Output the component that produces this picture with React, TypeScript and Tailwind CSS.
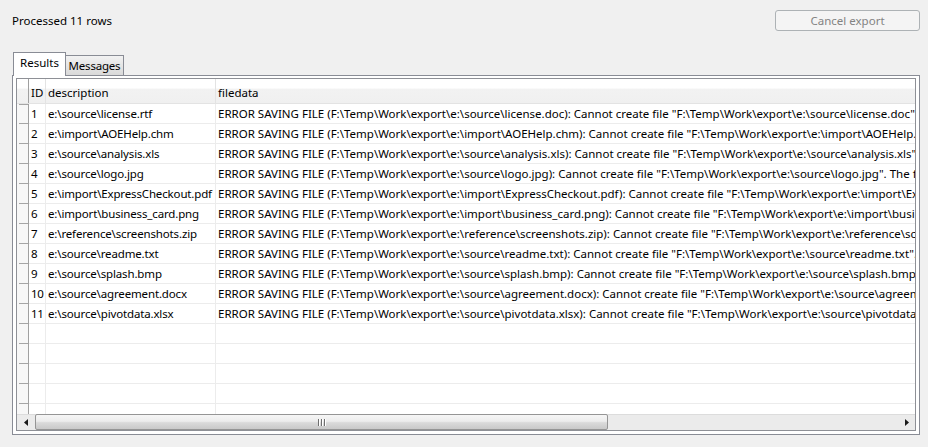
import React from "react";

const rows: [string, string, string][] = [
  ["1", "e:\\source\\license.rtf", "ERROR SAVING FILE (F:\\Temp\\Work\\export\\e:\\source\\license.doc): Cannot create file \"F:\\Temp\\Work\\export\\e:\\source\\license.doc\". The filename, directory name, or volume label syntax is incorrect"],
  ["2", "e:\\import\\AOEHelp.chm", "ERROR SAVING FILE (F:\\Temp\\Work\\export\\e:\\import\\AOEHelp.chm): Cannot create file \"F:\\Temp\\Work\\export\\e:\\import\\AOEHelp.chm\". The filename, directory name, or volume label syntax is incorrect"],
  ["3", "e:\\source\\analysis.xls", "ERROR SAVING FILE (F:\\Temp\\Work\\export\\e:\\source\\analysis.xls): Cannot create file \"F:\\Temp\\Work\\export\\e:\\source\\analysis.xls\". The filename, directory name, or volume label syntax is incorrect"],
  ["4", "e:\\source\\logo.jpg", "ERROR SAVING FILE (F:\\Temp\\Work\\export\\e:\\source\\logo.jpg): Cannot create file \"F:\\Temp\\Work\\export\\e:\\source\\logo.jpg\". The filename, directory name, or volume label syntax is incorrect"],
  ["5", "e:\\import\\ExpressCheckout.pdf", "ERROR SAVING FILE (F:\\Temp\\Work\\export\\e:\\import\\ExpressCheckout.pdf): Cannot create file \"F:\\Temp\\Work\\export\\e:\\import\\ExpressCheckout.pdf\". The filename, directory name, or volume label syntax is incorrect"],
  ["6", "e:\\import\\business_card.png", "ERROR SAVING FILE (F:\\Temp\\Work\\export\\e:\\import\\business_card.png): Cannot create file \"F:\\Temp\\Work\\export\\e:\\import\\business_card.png\". The filename, directory name, or volume label syntax is incorrect"],
  ["7", "e:\\reference\\screenshots.zip", "ERROR SAVING FILE (F:\\Temp\\Work\\export\\e:\\reference\\screenshots.zip): Cannot create file \"F:\\Temp\\Work\\export\\e:\\reference\\screenshots.zip\". The filename, directory name, or volume label syntax is incorrect"],
  ["8", "e:\\source\\readme.txt", "ERROR SAVING FILE (F:\\Temp\\Work\\export\\e:\\source\\readme.txt): Cannot create file \"F:\\Temp\\Work\\export\\e:\\source\\readme.txt\". The filename, directory name, or volume label syntax is incorrect"],
  ["9", "e:\\source\\splash.bmp", "ERROR SAVING FILE (F:\\Temp\\Work\\export\\e:\\source\\splash.bmp): Cannot create file \"F:\\Temp\\Work\\export\\e:\\source\\splash.bmp\". The filename, directory name, or volume label syntax is incorrect"],
  ["10", "e:\\source\\agreement.docx", "ERROR SAVING FILE (F:\\Temp\\Work\\export\\e:\\source\\agreement.docx): Cannot create file \"F:\\Temp\\Work\\export\\e:\\source\\agreement.docx\". The filename, directory name, or volume label syntax is incorrect"],
  ["11", "e:\\source\\pivotdata.xlsx", "ERROR SAVING FILE (F:\\Temp\\Work\\export\\e:\\source\\pivotdata.xlsx): Cannot create file \"F:\\Temp\\Work\\export\\e:\\source\\pivotdata.xlsx\". The filename, directory name, or volume label syntax is incorrect"],
];

const allRows: [string, string, string][] = [
  ...rows,
  ["", "", ""],
  ["", "", ""],
  ["", "", ""],
  ["", "", ""],
  ["", "", ""],
];

function RowHeader() {
  return (
    <div className="w-[12px] shrink-0 h-full bg-[#f7f7f7] border-r border-[#a0a0a0] flex flex-col justify-end">
      <div className="h-px ml-[2px] bg-[#a5a5a5]" />
    </div>
  );
}

export default function App() {
  return (
    <div
      className="w-[928px] h-[447px] bg-[#f0f0f0] flex flex-col pl-[12px] pr-[8px] pt-[10px] pb-[12px] text-[11.5px] text-black overflow-hidden"
      style={{ fontFamily: '"Noto Sans", "Open Sans", sans-serif' }}
    >
      {/* top bar */}
      <div className="h-[21px] flex items-center justify-between">
        <span className="leading-[16px] pt-[1px]">Processed 11 rows</span>
        <button className="w-[145px] h-[21px] rounded-[3px] border border-[#adb2b5] bg-[#f4f4f4] text-[#838383] leading-[16px] flex items-center justify-center">
          Cancel export
        </button>
      </div>

      {/* tabs */}
      <div className="mt-[21px] h-[24px] -mb-px flex items-end relative z-10">
        <div className="ml-px w-[53px] h-[24px] bg-white border-l border-t border-r border-[#898c95] flex justify-center pt-[2px] leading-[16px]">
          Results
        </div>
        <div className="w-[58px] h-[21px] border-t border-r border-b border-[#898c95] bg-gradient-to-b from-[#f2f2f2] to-[#d9d9d9] flex justify-center leading-[16px] pt-[2px] tracking-[-0.2px]">
          Messages
        </div>
      </div>

      {/* panel */}
      <div className="flex-1 min-h-0 border border-[#898c95] bg-white px-[3px] pt-[2px] pb-[3px] flex flex-col">
        <div className="flex-1 min-h-0 border border-[#8e9096] bg-white flex flex-col overflow-hidden">
          {/* header */}
          <div className="h-[25px] shrink-0 flex border-b border-[#e3e3e3] bg-[linear-gradient(to_bottom,#ffffff_0%,#ffffff_38%,#f2f2f2_42%,#f0f0f0_100%)]">
            <div className="w-[12px] shrink-0 h-full border-r border-[#a0a0a0] flex flex-col justify-end">
              <div className="h-px ml-[2px] -mb-px bg-[#a5a5a5] relative top-px" />
            </div>
            <div className="w-[17px] shrink-0 border-r border-[#e3e3e3] px-[2px] pt-[6px] leading-[16px]">ID</div>
            <div className="w-[170px] shrink-0 border-r border-[#e3e3e3] px-[2px] pt-[6px] leading-[16px]">description</div>
            <div className="flex-1 min-w-0 px-[2px] pt-[6px] leading-[16px]">filedata</div>
          </div>

          {/* body */}
          <div className="flex-1 min-h-0 overflow-hidden">
            {allRows.map((r, i) => (
              <div key={i} className="h-[20px] flex">
                <RowHeader />
                <div className="w-[17px] shrink-0 border-r border-b border-[#ececec] px-[2px] pt-[2px] leading-[16px] whitespace-nowrap overflow-hidden tracking-[-0.3px]">
                  {r[0]}
                </div>
                <div className="w-[170px] shrink-0 border-r border-b border-[#ececec] px-[2px] pt-[2px] leading-[16px] whitespace-nowrap overflow-hidden tracking-[-0.15px]">
                  {r[1]}
                </div>
                <div className="flex-1 min-w-0 border-b border-[#ececec] px-[2px] pt-[2px] leading-[16px] whitespace-nowrap overflow-hidden">
                  {r[2]}
                </div>
              </div>
            ))}
          </div>

          {/* horizontal scrollbar */}
          <div className="h-[16px] shrink-0 flex bg-[#ebebeb] border-t border-[#dcdcdc]">
            <div className="w-[18px] shrink-0 flex items-center justify-center">
              <svg width="4" height="7" viewBox="0 0 4 7">
                <path d="M4 0 L0 3.5 L4 7 Z" fill="#1a1a1a" />
              </svg>
            </div>
            <div className="w-[573px] shrink-0 -mt-px h-[16px] rounded-[2px] border border-[#959595] bg-[linear-gradient(to_bottom,#f6f6f6_0%,#ececec_45%,#dadada_55%,#c9c9c9_100%)] flex items-center justify-center gap-[2px]">
              <div className="w-px h-[7px] bg-[#6e6e6e] shadow-[1px_0_0_#ffffff]" />
              <div className="w-px h-[7px] bg-[#6e6e6e] shadow-[1px_0_0_#ffffff]" />
              <div className="w-px h-[7px] bg-[#6e6e6e] shadow-[1px_0_0_#ffffff]" />
            </div>
            <div className="flex-1" />
            <div className="w-[17px] shrink-0 flex items-center justify-center">
              <svg width="4" height="7" viewBox="0 0 4 7">
                <path d="M0 0 L4 3.5 L0 7 Z" fill="#1a1a1a" />
              </svg>
            </div>
          </div>
        </div>
      </div>
    </div>
  );
}
